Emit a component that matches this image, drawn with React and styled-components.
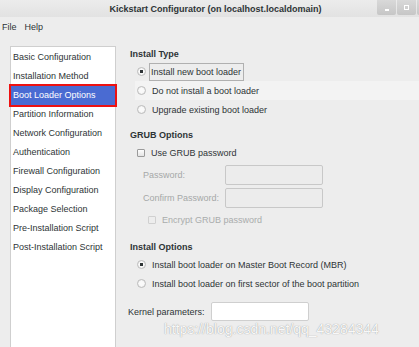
import React from "react";
import styled, { createGlobalStyle } from "styled-components";

const GlobalStyle = createGlobalStyle`
  html, body {
    margin: 0;
    padding: 0;
    background: #ededed;
  }
  body {
    font-family: "Liberation Sans", Arial, sans-serif;
    font-size: 9px;
    color: #2e3436;
  }
`;

const NAV_ITEMS = [
  "Basic Configuration",
  "Installation Method",
  "Boot Loader Options",
  "Partition Information",
  "Network Configuration",
  "Authentication",
  "Firewall Configuration",
  "Display Configuration",
  "Package Selection",
  "Pre-Installation Script",
  "Post-Installation Script",
];

const App = () => {
  return (
    <Window>
      <GlobalStyle />
      <TitleBar>
        <Title>Kickstart Configurator (on localhost.localdomain)</Title>
        <WindowButtons>
          <WinButton>
            <MinGlyph />
          </WinButton>
          <WinButton>
            <MaxGlyph />
          </WinButton>
          <WinButton />
        </WindowButtons>
      </TitleBar>
      <MenuBar>
        <MenuItem>File</MenuItem>
        <MenuItem>Help</MenuItem>
      </MenuBar>
      <Body>
        <Sidebar>
          {NAV_ITEMS.map((item) => (
            <NavItem key={item} active={item === "Boot Loader Options"}>
              {item}
            </NavItem>
          ))}
        </Sidebar>
        <Content>
          <Heading>Install Type</Heading>
          <OptionList>
            <OptionRow>
              <Radio checked />
              <FocusLabel>Install new boot loader</FocusLabel>
            </OptionRow>
            <OptionRow hover>
              <Radio />
              <span>Do not install a boot loader</span>
            </OptionRow>
            <OptionRow>
              <Radio />
              <span>Upgrade existing boot loader</span>
            </OptionRow>
          </OptionList>

          <Heading top={8}>GRUB Options</Heading>
          <OptionList>
            <OptionRow>
              <Checkbox />
              <span>Use GRUB password</span>
            </OptionRow>
          </OptionList>
          <FieldRow>
            <FieldLabel disabled>Password:</FieldLabel>
            <Field disabled />
          </FieldRow>
          <FieldRow>
            <FieldLabel disabled>Confirm Password:</FieldLabel>
            <Field disabled />
          </FieldRow>
          <SubOption>
            <Checkbox disabled />
            <span>Encrypt GRUB password</span>
          </SubOption>

          <Heading top={10}>Install Options</Heading>
          <OptionList>
            <OptionRow>
              <Radio checked />
              <span>Install boot loader on Master Boot Record (MBR)</span>
            </OptionRow>
            <OptionRow>
              <Radio />
              <span>Install boot loader on first sector of the boot partition</span>
            </OptionRow>
          </OptionList>
          <KernelRow>
            <KernelLabel>Kernel parameters:</KernelLabel>
            <KernelField />
          </KernelRow>
        </Content>
      </Body>
      <Watermark>https://blog.csdn.net/qq_43284344</Watermark>
    </Window>
  );
};

const Window = styled.div`
  position: relative;
  width: 419px;
  height: 347px;
  overflow: hidden;
  background: #ededed;
  display: flex;
  flex-direction: column;
`;

const TitleBar = styled.div`
  position: relative;
  height: 17px;
  display: flex;
  align-items: center;
  justify-content: center;
  background: linear-gradient(#ececec, #e2e2e2);
`;

const Title = styled.div`
  font-weight: bold;
  font-size: 9px;
  color: #2e3436;
  margin-left: 12px;
`;

const WindowButtons = styled.div`
  position: absolute;
  top: 0;
  left: 377px;
  display: flex;
  gap: 1px;
`;

const WinButton = styled.div`
  width: 19px;
  height: 15px;
  background: linear-gradient(#d9d9d9, #c6c6c6);
  border-radius: 0 0 2px 2px;
  display: flex;
  align-items: center;
  justify-content: center;
`;

const MinGlyph = styled.div`
  width: 4px;
  height: 2px;
  margin-top: 5px;
  background: #fff;
`;

const MaxGlyph = styled.div`
  width: 3px;
  height: 3px;
  border: 1px solid #fff;
`;

const MenuBar = styled.div`
  height: 20px;
  display: flex;
  align-items: center;
  gap: 8px;
  padding-left: 2px;
  font-size: 9px;
`;

const MenuItem = styled.span`
  color: #2e3436;
`;

const Body = styled.div`
  flex: 1;
  display: flex;
  padding: 9px 0 0 10px;
  gap: 11px;
`;

const Sidebar = styled.div`
  width: 104px;
  background: #fff;
  border: 1px solid #cfcfcf;
  border-bottom: none;
  padding-top: 1px;
  display: flex;
  flex-direction: column;
`;

const NavItem = styled.div`
  height: 19px;
  line-height: 19px;
  padding-left: 2px;
  white-space: nowrap;
  color: ${(p) => (p.active ? "#fff" : "#2e3436")};
  background: ${(p) => (p.active ? "#4a6bd2" : "transparent")};
  outline: ${(p) => (p.active ? "2px solid #ee1111" : "none")};
`;

const Content = styled.div`
  flex: 1;
  display: flex;
  flex-direction: column;
`;

const Heading = styled.div`
  font-weight: bold;
  height: 16px;
  line-height: 17px;
  padding-left: 3px;
  margin-top: ${(p) => p.top || 0}px;
`;

const OptionList = styled.div`
  display: flex;
  flex-direction: column;
  margin-left: 8px;
`;

const OptionRow = styled.div`
  height: 19px;
  display: flex;
  align-items: center;
  gap: 6px;
  padding-left: 2px;
  background: ${(p) => (p.hover ? "#f3f3f3" : "transparent")};
`;

const Radio = styled.span`
  width: 7px;
  height: 7px;
  border-radius: 50%;
  border: 1px solid #bcbcbc;
  background: radial-gradient(circle, ${(p) => (p.checked ? "#2e3436 0 1.5px, " : "")}#fafafa 2px, #e4e4e4 100%);
  flex-shrink: 0;
`;

const FocusLabel = styled.span`
  outline: 1px solid #b0b0b0;
  outline-offset: 0;
  padding: 3px 2px 3px 1px;
  margin-left: -2px;
`;

const Checkbox = styled.span`
  width: 6px;
  height: 6px;
  border: 1px solid ${(p) => (p.disabled ? "#d0d0d0" : "#9a9a9a")};
  border-radius: 1px;
  background: ${(p) => (p.disabled ? "#ededed" : "linear-gradient(#fdfdfd, #e4e4e4)")};
  flex-shrink: 0;
`;

const FieldRow = styled.div`
  display: flex;
  align-items: center;
  height: 20px;
  margin-top: 3px;
  padding-left: 16px;
`;

const FieldLabel = styled.span`
  width: 82px;
  color: ${(p) => (p.disabled ? "#a5a8a8" : "#2e3436")};
`;

const Field = styled.div`
  width: 96px;
  height: 18px;
  border: 1px solid #c8c8c8;
  border-radius: 2px;
  background: ${(p) => (p.disabled ? "#ececec" : "#fff")};
`;

const SubOption = styled(OptionRow)`
  height: 18px;
  padding-left: 21px;
  margin-top: 3px;
  color: #a9acac;
`;

const KernelRow = styled.div`
  display: flex;
  align-items: center;
  margin-top: 9px;
  padding-left: 1px;
  height: 19px;
`;

const KernelLabel = styled.span`
  width: 83px;
`;

const KernelField = styled.div`
  width: 96px;
  height: 17px;
  background: #fff;
  border: 1px solid #cfcfcf;
  border-radius: 2px;
`;

const Watermark = styled.div`
  position: absolute;
  left: 164px;
  top: 322px;
  font-family: "Liberation Sans", Arial, sans-serif;
  font-size: 14px;
  line-height: 14px;
  color: rgba(255, 255, 255, 0.95);
  text-shadow: 0 0 1px rgba(90, 90, 90, 0.7);
  white-space: nowrap;
`;

export default App;
